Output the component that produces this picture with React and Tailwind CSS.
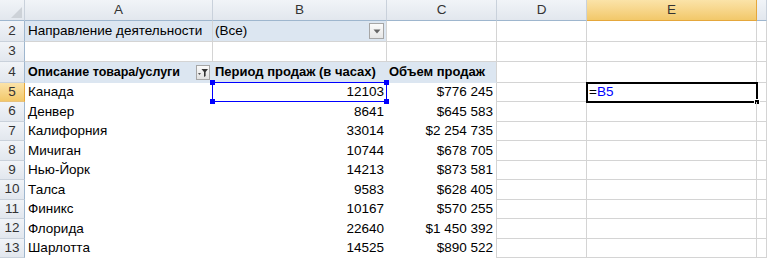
const font = { fontFamily: '"Liberation Sans", Arial, sans-serif' };

const cols = [
  { key: 'A', w: 'w-[188px]' },
  { key: 'B', w: 'w-[174px]' },
  { key: 'C', w: 'w-[110px]' },
  { key: 'D', w: 'w-[90px]' },
  { key: 'E', w: 'w-[170px]' },
  { key: 'F', w: 'w-[10px]' },
];

const rows = [
  ['Канада', '12103', '$776 245'],
  ['Денвер', '8641', '$645 583'],
  ['Калифорния', '33014', '$2 254 735'],
  ['Мичиган', '10744', '$678 705'],
  ['Нью-Йорк', '14213', '$873 581'],
  ['Талса', '9583', '$628 405'],
  ['Финикс', '10167', '$570 255'],
  ['Флорида', '22640', '$1 450 392'],
  ['Шарлотта', '14525', '$890 522'],
];

const heights = ['h-[19px]', 'h-[20px]'];

function RowHead({ n, active }) {
  return (
    <div
      className={`w-[25px] shrink-0 flex items-center justify-center border-r border-b text-[13.5px] text-[#333] ${
        active
          ? 'bg-gradient-to-b from-[#fbe3a8] to-[#f2c869] border-r-[#e5a73b] border-b-[#e8c27c]'
          : 'bg-gradient-to-b from-[#f1f4f8] to-[#e2e7ee] border-r-[#9eb6ce] border-b-[#c9d1db]'
      }`}
    >
      {n}
    </div>
  );
}

function Cell({ w, size = 'text-[13.5px]', className = '', children }) {
  return (
    <div className={`${w} ${size} shrink-0 flex items-center overflow-visible whitespace-nowrap text-black ${className}`}>
      {children}
    </div>
  );
}

const grid = 'border-r border-b border-[#d4d4d4]';

function FilterButton() {
  return (
    <div className="w-[14px] h-[15px] mr-[3px] border border-[#a6a6a6] bg-gradient-to-b from-[#fafafa] to-[#e1e1e1] flex items-center justify-center">
      <svg width="12" height="11" viewBox="0 0 12 11">
        <path d="M1 6 L4 6 L2.5 8 Z" fill="#555" />
        <path d="M4.5 2 L11 2 L8.6 5 L8.6 9 L7 10 L7 5 Z" fill="#333" />
      </svg>
    </div>
  );
}

function DropButton() {
  return (
    <div className="w-[15px] h-[16px] mr-[2px] border border-[#a6a6a6] bg-gradient-to-b from-[#fbfbfb] to-[#e6e6e6] flex items-center justify-center">
      <svg width="8" height="5" viewBox="0 0 8 5">
        <path d="M0.5 0.5 L7.5 0.5 L4 4.5 Z" fill="#666" />
      </svg>
    </div>
  );
}

export default function App() {
  return (
    <div className="w-[767px] h-[258px] overflow-hidden bg-white select-none" style={font}>
      {/* column headers */}
      <div className="flex h-[21px]">
        <div className="w-[25px] shrink-0 relative bg-gradient-to-b from-[#f1f4f8] to-[#e2e7ee] border-r border-b border-r-[#c9d1db] border-b-[#9eb6ce]">
          <svg className="absolute right-[2px] bottom-[2px]" width="11" height="11" viewBox="0 0 11 11">
            <path d="M11 0 L11 11 L0 11 Z" fill="#cdd2d8" />
          </svg>
        </div>
        {cols.map((c) => (
          <div
            key={c.key}
            className={`${c.w} shrink-0 flex items-center justify-center border-r border-b text-[13.5px] text-[#333] ${
              c.key === 'E'
                ? 'bg-gradient-to-b from-[#fbe3a8] to-[#f2c869] border-r-[#e5a73b] border-b-[#e5a73b]'
                : 'bg-gradient-to-b from-[#f1f4f8] to-[#e2e7ee] border-r-[#c9d1db] border-b-[#9eb6ce]'
            }`}
          >
            {c.key === 'F' ? '' : c.key}
          </div>
        ))}
      </div>

      {/* row 2 */}
      <div className="flex h-[21px]">
        <RowHead n="2" />
        <Cell w="w-[188px]" className={`${grid} bg-[#dce6f1] pl-[3px]`}>Направление деятельности</Cell>
        <Cell w="w-[174px]" className={`${grid} bg-[#dce6f1] pl-[2px] justify-between`}>
          <span>(Все)</span>
          <DropButton />
        </Cell>
        <Cell w="w-[110px]" className={grid} />
        <Cell w="w-[90px]" className={grid} />
        <Cell w="w-[170px]" className={grid} />
        <Cell w="w-[10px]" className={grid} />
      </div>

      {/* row 3 */}
      <div className="flex h-[20px]">
        <RowHead n="3" />
        {cols.map((c) => (
          <Cell key={c.key} w={c.w} className={grid} />
        ))}
      </div>

      {/* row 4 */}
      <div className="flex h-[21px]">
        <RowHead n="4" />
        <Cell w="w-[188px]" size="text-[12.5px]" className="bg-[#dce6f1] border-b border-[#dce6f1] pl-[3px] font-bold justify-between">
          <span>Описание товара/услуги</span>
          <FilterButton />
        </Cell>
        <Cell w="w-[174px]" size="text-[13px]" className="bg-[#dce6f1] border-b border-[#dce6f1] pl-[2px] font-bold">Период продаж (в часах)</Cell>
        <Cell w="w-[110px]" size="text-[13px]" className="bg-[#dce6f1] border-b border-r border-[#dce6f1] border-r-[#d4d4d4] pl-[2px] font-bold">Объем продаж</Cell>
        <Cell w="w-[90px]" className={grid} />
        <Cell w="w-[170px]" className={grid} />
        <Cell w="w-[10px]" className={grid} />
      </div>

      {/* data rows */}
      {rows.map((r, i) => (
        <div key={i} className={`flex ${heights[i % 2]}`}>
          <RowHead n={String(i + 5)} active={i === 0} />
          <Cell w="w-[188px]" className="pl-[3px] relative">
            {r[0]}
          </Cell>
          <Cell w="w-[174px]" className="justify-end pr-[3px] relative">
            {i === 0 && (
              <div className="absolute -left-[1px] -top-[1px] w-[175px] h-[20px] border border-[#0000ff] pointer-events-none">
                <div className="absolute -left-[3px] -top-[3px] w-[5px] h-[5px] bg-[#0000ff]" />
                <div className="absolute -right-[3px] -top-[3px] w-[5px] h-[5px] bg-[#0000ff]" />
                <div className="absolute -left-[3px] -bottom-[3px] w-[5px] h-[5px] bg-[#0000ff]" />
                <div className="absolute -right-[3px] -bottom-[3px] w-[5px] h-[5px] bg-[#0000ff]" />
              </div>
            )}
            <span className="relative">{r[1]}</span>
          </Cell>
          <Cell w="w-[110px]" className="justify-end pr-[3px] border-r border-[#d4d4d4]">
            {r[2]}
          </Cell>
          <Cell w="w-[90px]" className={grid} />
          <Cell w="w-[170px]" className={`${grid} relative`}>
            {i === 0 && (
              <div className="absolute -left-[1px] -top-[1px] w-[172px] h-[21px] border-2 border-black flex items-center pl-[1px]">
                <span>=</span>
                <span className="text-[#0000ff]">B5</span>
                <div className="absolute -right-[4px] -bottom-[4px] w-[6px] h-[6px] bg-black border border-white" />
              </div>
            )}
          </Cell>
          <Cell w="w-[10px]" className={grid} />
        </div>
      ))}
    </div>
  );
}
